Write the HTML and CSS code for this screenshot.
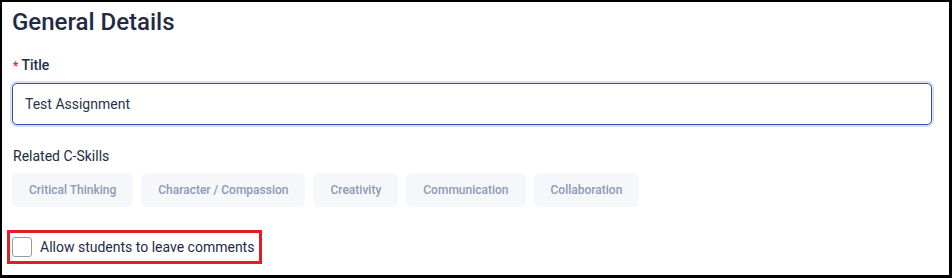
FILE: index.html
```html
<!DOCTYPE html>
<html lang="en">
<head>
  <meta charset="UTF-8" />
  <meta name="viewport" content="width=device-width, initial-scale=1.0">
  <title>General Details</title>
  <link rel="stylesheet" href="styles.css">
</head>
<body>
  <div class="frame">
    <h2 class="section-title">General Details</h2>

    <!-- Title field -->
    <label class="field-label" for="title"><span class="req">*</span> Title</label>
    <input type="text" id="title" class="text-input" value="Test Assignment">

    <!-- C-Skills -->
    <p class="field-label skills-label">Related C-Skills</p>
    <div class="chips">
      <span class="chip">Critical Thinking</span>
      <span class="chip">Character / Compassion</span>
      <span class="chip">Creativity</span>
      <span class="chip">Communication</span>
      <span class="chip">Collaboration</span>
    </div>

    <label class="comment-option">
      <span class="checkbox"></span>
      Allow students to leave comments
    </label>
  </div>
</body>
</html>
```

FILE: styles.css
```css
* {
  box-sizing: border-box;
}

body {
  margin: 0;
  font-family: Roboto, "Liberation Sans", Arial, sans-serif;
  color: #1f2a44;
  background: #fff;
}

.frame {
  width: 952px;
  height: 278px;
  border-style: solid;
  border-color: #000;
  border-width: 2px 3px 3px 2px;
  padding: 5px 17px 0 10px;
}

.section-title {
  margin: 0;
  font-size: 24px;
  font-weight: 500;
  line-height: 30px;
  color: #1f2a44;
}

.field-label {
  display: block;
  margin: 19px 0 8px 1px;
  font-size: 14px;
  font-weight: 500;
  line-height: 18px;
  color: #1f2a44;
}

.req {
  color: #e0202a;
  font-size: 12px;
}

.text-input {
  display: block;
  width: 920px;
  height: 42px;
  margin-left: 0;
  padding: 0 12px;
  border: 1px solid #3b4cc0;
  border-radius: 5px;
  box-shadow: 0 0 0 2px #dadef5;
  font-family: inherit;
  font-size: 14px;
  color: #2b3445;
  outline: none;
}

.skills-label {
  margin-top: 22px;
  font-weight: 400;
}

.chips {
  display: flex;
  gap: 8px;
}

.chip {
  height: 34px;
  line-height: 34px;
  padding: 0 17px;
  border-radius: 6px;
  background: #f5f7fb;
  color: #8c9ab4;
  font-size: 12px;
  font-weight: 500;
}

.comment-option {
  display: inline-flex;
  align-items: center;
  gap: 8px;
  margin: 23px 0 0 -5px;
  padding: 4px 5px 4px 2px;
  border: 3px solid #e31b23;
  font-size: 14px;
  color: #1f2a44;
}

.checkbox {
  width: 20px;
  height: 20px;
  border: 1px solid #9a9a9a;
  border-radius: 3px;
  background: #fff;
}
```
